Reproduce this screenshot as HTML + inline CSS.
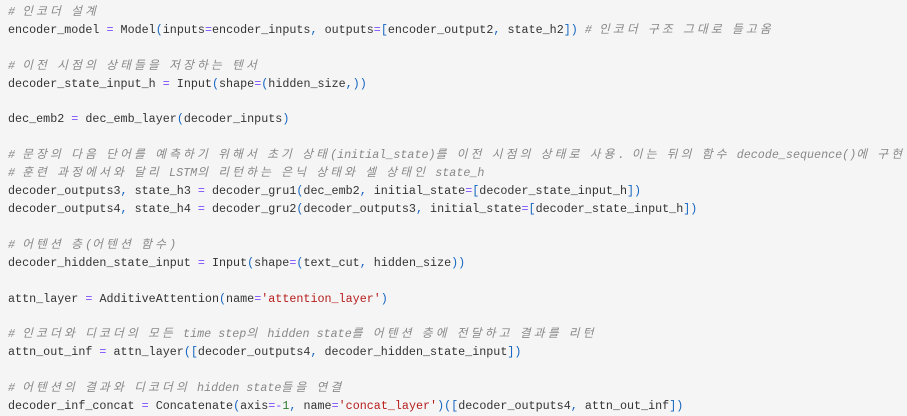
<!DOCTYPE html>
<html><head><meta charset="utf-8"><style>
html,body{margin:0;padding:0;background:#f5f5f5;width:907px;height:415px;overflow:hidden}
pre{margin:0;position:absolute;left:8px;top:4px;font-family:"Liberation Mono","Noto Sans CJK KR",monospace;font-size:11.72px;line-height:17.9px;color:#333;white-space:pre}
.c{color:#888;font-style:italic}
.k{letter-spacing:3.2px}
.p{color:#7c4dff}
.b{color:#1565c0}
.s{color:#b71c1c}
.n{color:#2e7d32}
</style></head><body><pre><span class="c"># <span class="k">인코더</span> <span class="k">설계</span></span>
encoder_model <span class="p">=</span> Model<span class="b">(</span>inputs<span class="p">=</span>encoder_inputs<span class="b">,</span> outputs<span class="p">=</span><span class="b">[</span>encoder_output2<span class="b">,</span> state_h2<span class="b">])</span> <span class="c"># <span class="k">인코더</span> <span class="k">구조</span> <span class="k">그대로</span> <span class="k">들고옴</span></span>

<span class="c"># <span class="k">이전</span> <span class="k">시점의</span> <span class="k">상태들을</span> <span class="k">저장하는</span> <span class="k">텐서</span></span>
decoder_state_input_h <span class="p">=</span> Input<span class="b">(</span>shape<span class="p">=</span><span class="b">(</span>hidden_size<span class="b">,))</span>

dec_emb2 <span class="p">=</span> dec_emb_layer<span class="b">(</span>decoder_inputs<span class="b">)</span>

<span class="c"># <span class="k">문장의</span> <span class="k">다음</span> <span class="k">단어를</span> <span class="k">예측하기</span> <span class="k">위해서</span> <span class="k">초기</span> <span class="k">상태</span>(initial_state)<span class="k">를</span> <span class="k">이전</span> <span class="k">시점의</span> <span class="k">상태로</span> <span class="k">사용</span>. <span class="k">이는</span> <span class="k">뒤의</span> <span class="k">함수</span> decode_sequence()<span class="k">에</span> <span class="k">구현</span></span>
<span class="c"># <span class="k">훈련</span> <span class="k">과정에서와</span> <span class="k">달리</span> LSTM<span class="k">의</span> <span class="k">리턴하는</span> <span class="k">은닉</span> <span class="k">상태와</span> <span class="k">셀</span> <span class="k">상태인</span> state_h</span>
decoder_outputs3<span class="b">,</span> state_h3 <span class="p">=</span> decoder_gru1<span class="b">(</span>dec_emb2<span class="b">,</span> initial_state<span class="p">=</span><span class="b">[</span>decoder_state_input_h<span class="b">])</span>
decoder_outputs4<span class="b">,</span> state_h4 <span class="p">=</span> decoder_gru2<span class="b">(</span>decoder_outputs3<span class="b">,</span> initial_state<span class="p">=</span><span class="b">[</span>decoder_state_input_h<span class="b">])</span>

<span class="c"># <span class="k">어텐션</span> <span class="k">층</span>(<span class="k">어텐션</span> <span class="k">함수</span>)</span>
decoder_hidden_state_input <span class="p">=</span> Input<span class="b">(</span>shape<span class="p">=</span><span class="b">(</span>text_cut<span class="b">,</span> hidden_size<span class="b">))</span>

attn_layer <span class="p">=</span> AdditiveAttention<span class="b">(</span>name<span class="p">=</span><span class="s">'attention_layer'</span><span class="b">)</span>

<span class="c"># <span class="k">인코더와</span> <span class="k">디코더의</span> <span class="k">모든</span> time step<span class="k">의</span> hidden state<span class="k">를</span> <span class="k">어텐션</span> <span class="k">층에</span> <span class="k">전달하고</span> <span class="k">결과를</span> <span class="k">리턴</span></span>
attn_out_inf <span class="p">=</span> attn_layer<span class="b">([</span>decoder_outputs4<span class="b">,</span> decoder_hidden_state_input<span class="b">])</span>

<span class="c"># <span class="k">어텐션의</span> <span class="k">결과와</span> <span class="k">디코더의</span> hidden state<span class="k">들을</span> <span class="k">연결</span></span>
decoder_inf_concat <span class="p">=</span> Concatenate<span class="b">(</span>axis<span class="p">=-</span><span class="n">1</span><span class="b">,</span> name<span class="p">=</span><span class="s">'concat_layer'</span><span class="b">)([</span>decoder_outputs4<span class="b">,</span> attn_out_inf<span class="b">])</span></pre></body></html>
